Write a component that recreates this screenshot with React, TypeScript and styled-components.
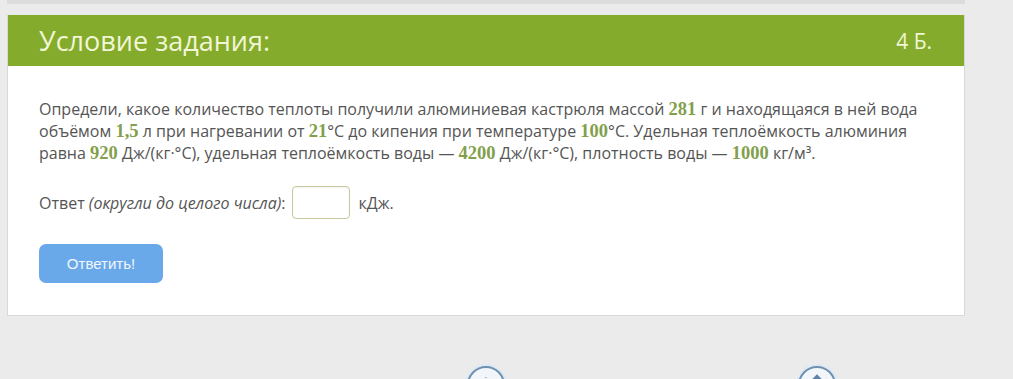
import styled, { createGlobalStyle } from 'styled-components'

const Global = createGlobalStyle`
  html, body { margin: 0; padding: 0; background: #ebebeb; height: 379px; overflow: hidden; }
  body { font-family: "Open Sans", "Noto Sans", sans-serif; }
`;

const Page = styled.div`
  width: 958px;
  margin-left: 7px;
  height: 379px;
  overflow: hidden;
`;

const TopStrip = styled.div`
  height: 4px;
  background: #dcdcdc;
  margin-bottom: 11px;
`;

const Card = styled.div`
  background: #fff;
  border: 1px solid #d9d9d9;
  border-top: none;
`;

const Header = styled.div`
  height: 51px;
  background: #84ab2c;
  padding: 0 32px 0 31px;
  display: flex;
  align-items: center;
  justify-content: space-between;
  color: #f1f6d6;
  font-size: 27px;
`;

const Points = styled.span`
  font-size: 21px;
`;

const Body = styled.div`
  padding: 32px 28px 32px 31px;
  color: #555;
  font-size: 16px;
  line-height: 22px;
`;

const Question = styled.p`
  margin: 0;
`;

const Num = styled.span`
  font-family: "Liberation Serif", "DejaVu Serif", serif;
  font-weight: 700;
  font-size: 18.5px;
  line-height: 1;
  color: #82a04c;
`;

const AnswerRow = styled.div`
  display: flex;
  align-items: center;
  margin-top: 22px;
  gap: 7px;
`;

const Hint = styled.i`
  font-style: italic;
`;

const AnswerInput = styled.input`
  width: 58px;
  height: 33px;
  box-sizing: border-box;
  border: 1px solid #c9c89c;
  border-radius: 4px;
  box-shadow: inset 0 1px 2px rgba(0, 0, 0, 0.06);
  margin-right: 1px;
`;

const SubmitButton = styled.button`
  margin-top: 25px;
  width: 124px;
  height: 39px;
  border: none;
  border-radius: 7px;
  background: #6aa9e9;
  color: #f2f7ff;
  font-family: "Liberation Sans", Arial, sans-serif;
  font-size: 15px;
`;

const Nav = styled.div`
  display: flex;
  gap: 293px;
  padding: 50px 0 0 460px;
`;

const NavCircle = styled.div`
  width: 38px;
  height: 38px;
  box-sizing: border-box;
  border-radius: 50%;
  border: 2px solid #7090b0;
  background: #f2f5f9;
  box-shadow: 0 0 0 2px #dbe8f5;
  display: flex;
  justify-content: center;
  padding-top: 6px;
`;

function Arrow({ up }: { up?: boolean }) {
  return (
    <svg width="14" height="20" viewBox="0 0 14 20">
      {up ? (
        <path d="M7 2 L7 18 M2 7 L7 2 L12 7" stroke="#5e83a8" strokeWidth="2.4" fill="none" />
      ) : (
        <path d="M7 3 L7 3.5" stroke="#5e83a8" strokeWidth="2" fill="none" />
      )}
    </svg>
  );
}

export default function App() {
  return (
    <Page>
      <Global />
      <TopStrip />
      <Card>
        <Header>
          <span>Условие задания:</span>
          <Points>4 Б.</Points>
        </Header>
        <Body>
          <Question>
            Определи, какое количество теплоты получили алюминиевая кастрюля массой <Num>281</Num> г и находящаяся в ней вода
            объёмом <Num>1,5</Num> л при нагревании от <Num>21</Num>°C до кипения при температуре <Num>100</Num>°C. Удельная теплоёмкость алюминия
            равна <Num>920</Num> Дж/(кг·°C), удельная теплоёмкость воды — <Num>4200</Num> Дж/(кг·°C), плотность воды — <Num>1000</Num> кг/м³.
          </Question>
          <AnswerRow>
            <span>Ответ <Hint>(округли до целого числа)</Hint>:</span>
            <AnswerInput type="text" />
            <span>кДж.</span>
          </AnswerRow>
          <SubmitButton>Ответить!</SubmitButton>
        </Body>
      </Card>
      <Nav>
        <NavCircle><Arrow /></NavCircle>
        <NavCircle><Arrow up /></NavCircle>
      </Nav>
    </Page>
  );
}
